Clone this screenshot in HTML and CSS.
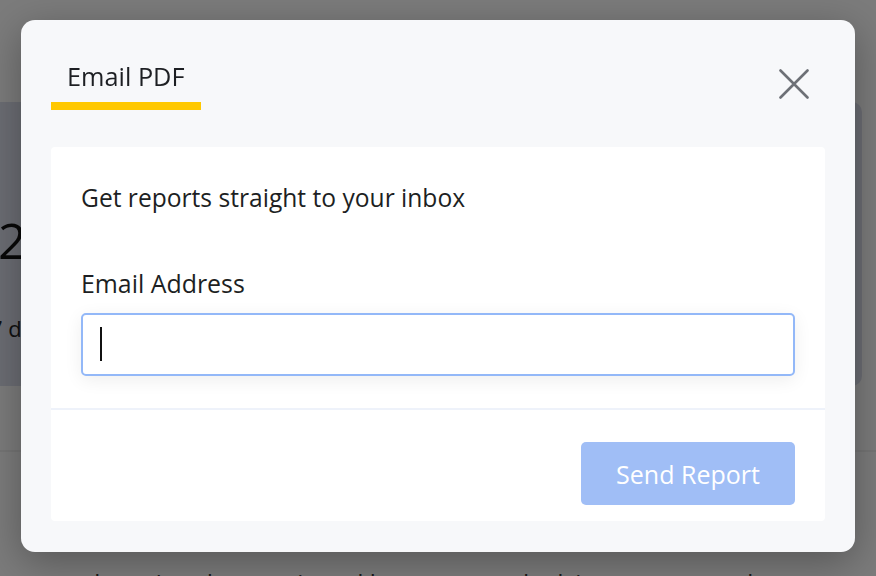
FILE: index.html
```html
<!DOCTYPE html>
<html lang="en">
<head>
<meta charset="utf-8">
<title>Email PDF</title>
<link rel="stylesheet" href="styles.css">
</head>
<body>
<div class="page">
  <div class="stat-card">
    <div class="stat-value">21,480</div>
    <div class="stat-label">7 days</div>
  </div>
  <div class="page-section">
    <p class="page-text">are shown) and are reviewed by our trusted advisors every week</p>
  </div>
</div>

<div class="overlay">
  <div class="modal">
    <div class="modal-header">
      <div class="tab">Email PDF</div>
      <button class="close" aria-label="Close">
        <svg width="30" height="30" viewBox="0 0 30 30">
          <path d="M1.5 1.5 L28.5 28.5 M28.5 1.5 L1.5 28.5" stroke="#6d7076" stroke-width="2.6" stroke-linecap="round" fill="none"/>
        </svg>
      </button>
    </div>
    <div class="modal-card">
      <div class="card-body">
        <p class="intro">Get reports straight to your inbox</p>
        <label class="field-label">Email Address</label>
        <div class="input"><span class="caret"></span></div>
      </div>
      <div class="card-footer">
        <button class="send">Send Report</button>
      </div>
    </div>
  </div>
</div>
</body>
</html>
```

FILE: styles.css
```css
* { box-sizing: border-box; }

html, body {
  margin: 0;
  height: 100%;
  overflow: hidden;
}

body {
  font-family: "Open Sans", "Liberation Sans", sans-serif;
  background: #f6f6f6;
  color: #1d1f23;
}

.page {
  padding-top: 102px;
}

.stat-card {
  margin-left: -20px;
  width: 882px;
  height: 284px;
  background: #d6d9e6;
  border-radius: 10px;
  padding-top: 108px;
  padding-left: 18px;
}

.stat-value {
  font-size: 50px;
  line-height: 60px;
  color: #111;
}

.stat-label {
  margin-top: 44px;
  font-size: 22px;
  line-height: 28px;
  color: #222;
  margin-left: -8px;
}

.page-section {
  margin-top: 64px;
  border-top: 2px solid #e9e9e9;
  padding-top: 116px;
}

.page-text {
  margin: 0;
  font-size: 24px;
  line-height: 30px;
  color: #333;
  padding-left: 40px;
  white-space: nowrap;
}

.overlay {
  position: fixed;
  inset: 0;
  background: rgba(0, 0, 0, 0.5);
  display: flex;
  justify-content: center;
  align-items: flex-start;
  padding-top: 20px;
}

.modal {
  width: 834px;
  height: 532px;
  background: #f7f8fa;
  border-radius: 14px;
  padding: 40px 30px 31px;
  box-shadow: 0 10px 40px rgba(0, 0, 0, 0.3);
  display: flex;
  flex-direction: column;
}

.modal-header {
  display: flex;
  justify-content: space-between;
  align-items: flex-start;
  padding-right: 16px;
}

.tab {
  width: 150px;
  padding: 0 16px 10px;
  font-size: 25.3px;
  line-height: 32px;
  white-space: nowrap;
  border-bottom: 8px solid #ffc800;
  color: #1d1f23;
}

.close {
  margin-top: 9px;
  width: 30px;
  height: 30px;
  padding: 0;
  border: 0;
  background: none;
  display: block;
}

.close svg { display: block; }

.modal-card {
  margin-top: 37px;
  flex: 1;
  background: #ffffff;
  border-radius: 4px;
  display: flex;
  flex-direction: column;
}

.card-body {
  padding: 35px 30px 32px;
  border-bottom: 2px solid #eef2fa;
}

.intro {
  margin: 0;
  font-size: 24.6px;
  line-height: 32px;
}

.field-label {
  display: block;
  margin-top: 53px;
  font-size: 24.9px;
  line-height: 32px;
}

.input {
  margin-top: 14px;
  height: 63px;
  border: 2px solid #93b8f8;
  border-radius: 5px;
  background: #fff;
  box-shadow: 0 4px 18px rgba(0, 0, 0, 0.07);
  padding: 12px 17px;
}

.caret {
  display: block;
  width: 2px;
  height: 34px;
  background: #111;
}

.card-footer {
  flex: 1;
  display: flex;
  justify-content: flex-end;
  align-items: flex-start;
  padding: 32px 30px 0;
}

.send {
  width: 214px;
  height: 63px;
  border: 0;
  border-radius: 5px;
  background: #a0bef6;
  color: #ffffff;
  font-family: "Open Sans", "Liberation Sans", sans-serif;
  font-size: 25px;
  padding: 0;
}
```
